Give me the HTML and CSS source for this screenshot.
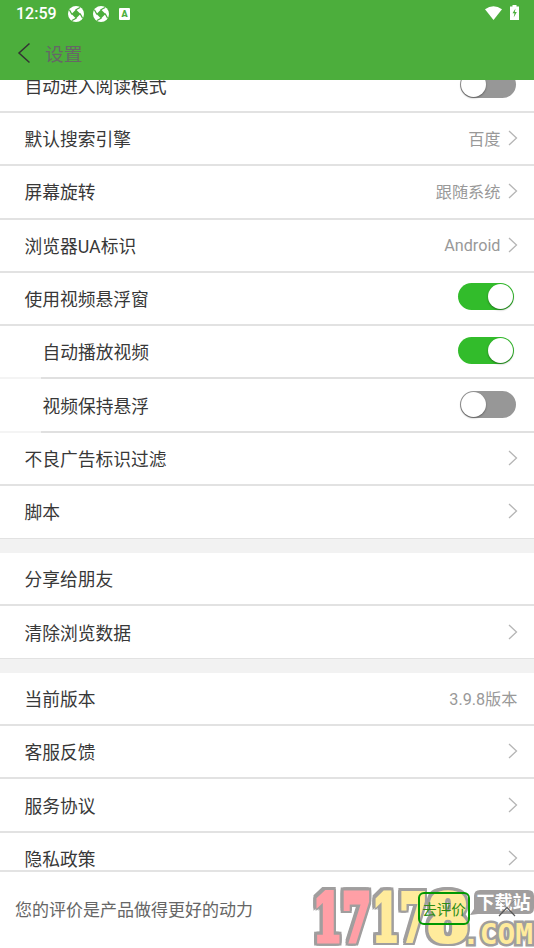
FILE: index.html
```html
<!DOCTYPE html>
<html lang="zh-CN">
<head>
<meta charset="utf-8">
<title>设置</title>
<link rel="stylesheet" href="styles.css">
</head>
<body>
<svg class="defs" aria-hidden="true">
  <symbol id="chev" viewBox="0 0 10 16"><path d="M1 1l7.500 7L1 15" fill="none" stroke="#b5b5b5" stroke-width="1.300"/></symbol>
  <symbol id="swirl" viewBox="0 0 16 16"><circle cx="8" cy="8" r="8" fill="#fff"/><path d="M8 3.500L12.500 8 8 12.500 3.500 8z" fill="#4cae3c"/><path d="M4 8.500L1.500 4M7.500 4L12 1.500M12 7.500L14.500 12M8.500 12L4 14.500" stroke="#4cae3c" stroke-width="1.300" fill="none"/></symbol>
</svg>
<header class="top">
  <div class="status">
    <span class="time">12:59</span>
    <svg class="swirl"><use href="#swirl"/></svg>
    <svg class="swirl"><use href="#swirl"/></svg>
    <span class="abox">A</span>
    <span class="spacer"></span>
    <svg class="wifi" viewBox="0 0 17 14"><path d="M0 3.300Q8.500-2.800 17 3.300L8.500 14z" fill="#fff"/></svg>
    <svg class="batt" viewBox="0 0 9 15"><path d="M2.500 0h4v1.500H9V15H0V1.500h2.500z" fill="#fff"/><path d="M5.500 3.500L2.500 8.300h2L3.700 12.500 6.800 7h-2z" fill="#4cae3c"/></svg>
  </div>
  <div class="bar">
    <svg class="back" viewBox="0 0 14 22"><path d="M12.500 1.500L2 11l10.500 9.500" fill="none" stroke="#333" stroke-width="1.500"/></svg>
    <h1>设置</h1>
  </div>
</header>
<main class="list">
  <section class="group first">
    <div class="row"><span>自动进入阅读模式</span><i class="toggle"></i></div>
    <div class="row"><span>默认搜索引擎</span><em>百度</em><svg class="chev"><use href="#chev"/></svg></div>
    <div class="row"><span>屏幕旋转</span><em>跟随系统</em><svg class="chev"><use href="#chev"/></svg></div>
    <div class="row"><span>浏览器UA标识</span><em class="latin">Android</em><svg class="chev"><use href="#chev"/></svg></div>
    <div class="row"><span>使用视频悬浮窗</span><i class="toggle on"></i></div>
    <div class="row sub"><span>自动播放视频</span><i class="toggle on"></i></div>
    <div class="row sub"><span>视频保持悬浮</span><i class="toggle"></i></div>
    <div class="row"><span>不良广告标识过滤</span><svg class="chev"><use href="#chev"/></svg></div>
    <div class="row"><span>脚本</span><svg class="chev"><use href="#chev"/></svg></div>
  </section>
  <section class="group">
    <div class="row"><span>分享给朋友</span></div>
    <div class="row"><span>清除浏览数据</span><svg class="chev"><use href="#chev"/></svg></div>
  </section>
  <section class="group">
    <div class="row"><span>当前版本</span><em>3.9.8版本</em></div>
    <div class="row"><span>客服反馈</span><svg class="chev"><use href="#chev"/></svg></div>
    <div class="row"><span>服务协议</span><svg class="chev"><use href="#chev"/></svg></div>
    <div class="row"><span>隐私政策</span><svg class="chev"><use href="#chev"/></svg></div>
  </section>
</main>
<footer class="rate">
  <svg class="mark" viewBox="0 0 226 64">
    <g class="num">
      <text class="red" x="5" y="57" textLength="58" lengthAdjust="spacingAndGlyphs">17</text>
      <text class="yellow" x="64" y="57" textLength="55" lengthAdjust="spacingAndGlyphs">17</text>
      <text class="yellow" x="119" y="57" textLength="42" lengthAdjust="spacingAndGlyphs">8</text>
    </g>
    <text class="com" x="154" y="60" textLength="71" lengthAdjust="spacingAndGlyphs">.COM</text>
    <path d="M172 6h48q6 0 6 6v12q0 6-6 6h-50l-8 1 4-6V12q0-6 6-6z" fill="#a09e9e"/>
    <text class="site" x="168.500" y="24.500">下载站</text>
  </svg>
  <p>您的评价是产品做得更好的动力</p>
  <button>去评价</button>
  <svg class="close" viewBox="0 0 18 18"><path d="M9 8.500L1 17M9 8.500L17 17" stroke="#555" stroke-width="1.200"/><path d="M1 1l8 7.500L17 1" fill="none" stroke="#777" stroke-width="1" opacity=".5"/></svg>
</footer>
</body>
</html>
```
FILE: styles.css
```css
* { box-sizing: border-box; }
body { margin: 0; width: 534px; height: 948px; overflow: hidden; display: flex; flex-direction: column; background: #fff; color: #383838; font-family: Roboto, "Noto Sans CJK SC", sans-serif; }
.defs { position: absolute; width: 0; height: 0; }
.top { height: 80px; flex: none; background: #4cae3c; }
.status { height: 27px; padding: 0 15.5px 0 16px; display: flex; align-items: center; color: #fff; }
.time { width: 52px; font-size: 16px; font-weight: 500; }
.swirl { width: 16px; height: 16px; margin-right: 8.500px; }
.abox { width: 11px; height: 12px; margin-left: 2px; border-radius: 1px; background: #fff; color: #4cae3c; font-size: 9px; font-weight: 900; line-height: 12px; text-align: center; }
.spacer { flex: 1; }
.wifi { width: 17px; height: 14px; margin: 0 8px 2px 0; }
.batt { width: 9px; height: 15px; margin-bottom: 2px; }
.bar { height: 53px; display: flex; align-items: center; padding: 0 0 2px 17px; }
.back { width: 14px; height: 22px; margin-right: 14px; }
h1 { margin: 0; font-size: 18.7px; font-weight: 400; color: #666; }
.list { flex: 1; min-height: 0; overflow: hidden; background: #f2f2f2; }
.group { background: #fff; margin-bottom: 13.7px; }
.first { margin-top: -20.4px; }
.row { height: 53.3px; padding: 0 16.5px 1px 24.5px; display: flex; align-items: center; border-bottom: 2px solid #e2e2e2; }
.row:last-child { border-bottom-width: 1px; }
.first .row:last-child { height: 52.9px; }
.row span { flex: 1; font-size: 17.75px; }
.row.sub { padding-left: 42.5px; }
.sub { border-image: linear-gradient(to right, #f4f4f4 42px, #e0e0e0 42px) 1; border-width: 0 0 2px; }
em { font-style: normal; font-size: 16.2px; color: #999; }
.latin { padding-top: 2px; }
.chev { width: 10px; height: 16px; margin-left: 7px; }
.toggle { width: 56px; height: 27px; margin: 0 2px 1px 0; border-radius: 14px; background: #979797; display: flex; }
.toggle::before { content: ""; width: 25px; height: 25px; margin: 1px; border-radius: 50%; background: #fff; box-shadow: 0 1px 2px #0006; }
.toggle.on { margin: 0 3.5px 2px 0; background: #32bc2b; justify-content: flex-end; }
.rate { position: relative; flex: none; height: 78px; border-top: 2px solid #e3e3e3; background: #fff; display: flex; align-items: center; padding: 0 17px 4px 15px; }
.rate p { margin: 0; flex: 1; font-size: 17px; color: #666; }
button { position: relative; width: 52px; height: 33px; margin-right: 28px; padding: 0; border: 2px solid #090; border-radius: 6px; background: none; color: #2c8c12; font: 14.5px/29px "Noto Sans CJK SC", sans-serif; }
.close { position: relative; width: 18px; height: 18px; margin-right: 1px; }
.mark { position: absolute; left: 308px; top: 12px; width: 226px; height: 64px; }
.num { filter: drop-shadow(2.5px 0 0 #a09e9e) drop-shadow(-2.5px 0 0 #a09e9e) drop-shadow(0 2.5px 0 #a09e9e) drop-shadow(0 -2.5px 0 #a09e9e); }
.num text { font: bold 66px "DejaVu Serif"; stroke-width: 5px; stroke-linejoin: miter; }
.red { fill: #ff9fa6; stroke: #ff9fa6; }
.yellow { fill: #ffeb9c; stroke: #ffeb9c; }
.num .yellow { stroke-width: 4px; }
.com { font: bold 28px "DejaVu Sans Mono"; fill: #ffeb9c; stroke: #a09e9e; stroke-width: 5px; paint-order: stroke; }
.site { font: bold 18px "Noto Sans CJK SC"; fill: #fff; }
```
